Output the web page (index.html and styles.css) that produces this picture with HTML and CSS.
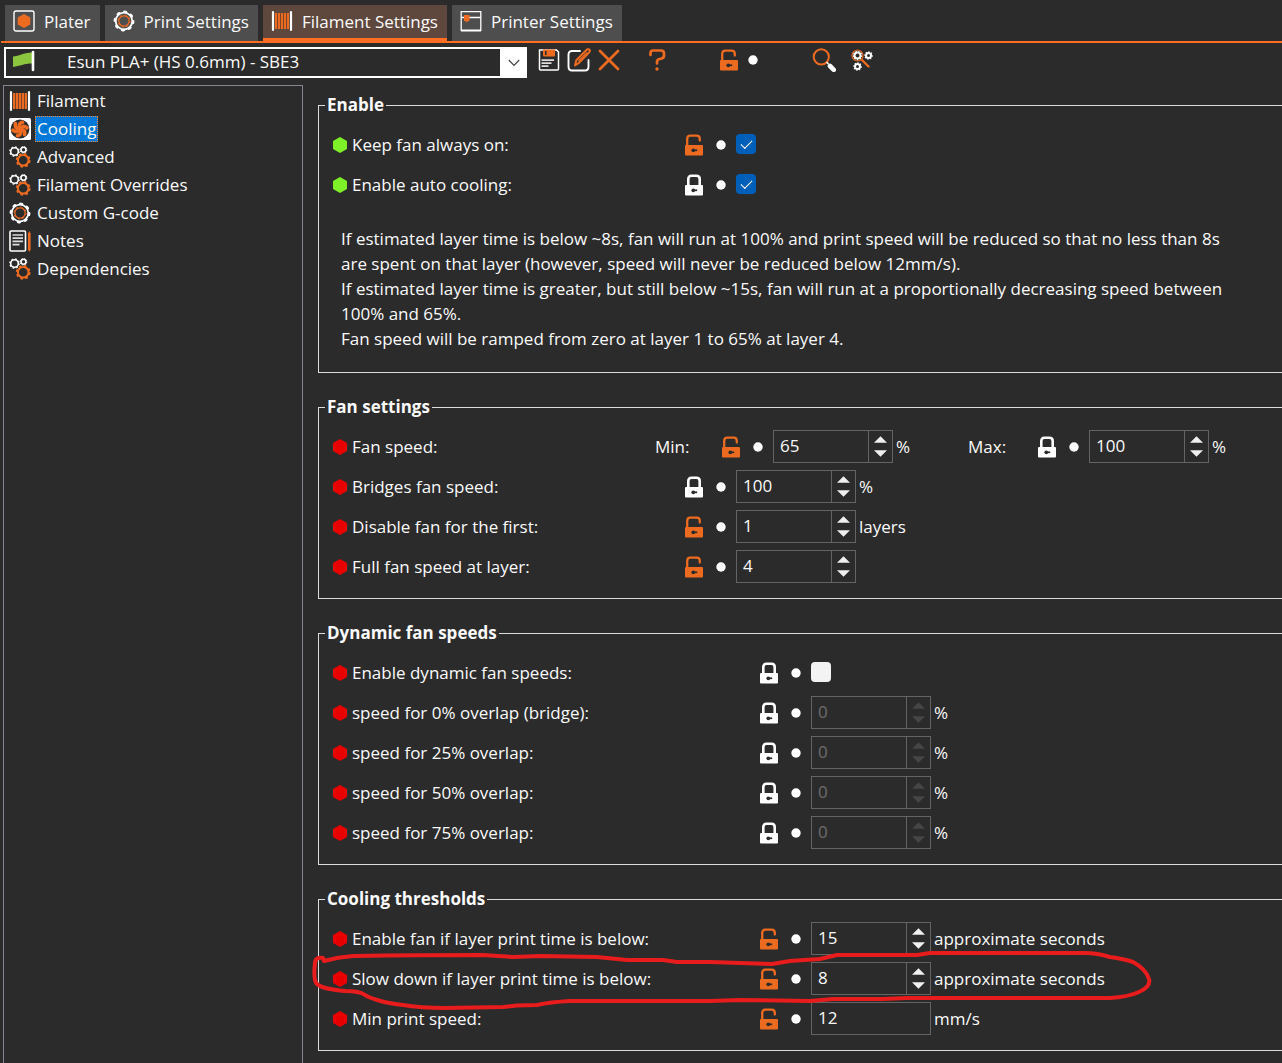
FILE: index.html
```html
<!DOCTYPE html>
<html lang="en">
<head>
<meta charset="utf-8">
<meta name="viewport" content="width=device-width, initial-scale=1">
<title>Filament Settings</title>
<link rel="stylesheet" href="styles.css">
</head>
<body>
<svg class="defs" aria-hidden="true">
  <symbol id="hex" viewBox="0 0 14 16"><path fill="currentColor" d="M7 0l7 4v8l-7 4-7-4V4z"/></symbol>
  <symbol id="locked" viewBox="0 0 20 22"><path fill="none" stroke="currentColor" stroke-width="2.6" d="M4.300 12V5Q4.300 1.800 7.500 1.800h5q3.200 0 3.200 3.200V12"/><rect x="1" y="11" width="18" height="10.500" rx="1" fill="currentColor"/><circle cx="9.300" cy="16.300" r="1.900" fill="#2b2b2b"/><path stroke="#2b2b2b" stroke-width="1.700" d="M10 16.300h3.200"/></symbol>
  <symbol id="unlocked" viewBox="0 0 20 22"><path fill="none" stroke="currentColor" stroke-width="2.300" stroke-linecap="round" d="M3.200 12V5Q3.200 1.700 6.400 1.700h6.200q3.200 0 3.200 3.200v1.600"/><rect x="1" y="11" width="18" height="10.500" rx="1" fill="currentColor"/><circle cx="9.300" cy="16.300" r="1.900" fill="#2b2b2b"/><path stroke="#2b2b2b" stroke-width="1.700" d="M10 16.300h3.200"/></symbol>
  <symbol id="dot" viewBox="0 0 10 10"><circle cx="5" cy="5" r="4.700" fill="#fff"/></symbol>
  <symbol id="up" viewBox="0 0 14 7"><path fill="currentColor" d="M7 0l7 7H0z"/></symbol>
  <symbol id="down" viewBox="0 0 14 7"><path fill="currentColor" d="M0 0h14L7 7z"/></symbol>
  <symbol id="spool" viewBox="0 0 22 22"><path fill="#ed6b21" d="M4 3h14v16H4z"/><path stroke="#2b2b2b" stroke-width=".6" d="M6.500 3v16M9.500 3v16M12.500 3v16M15.500 3v16"/><path stroke="#fff" stroke-width="2.200" stroke-linecap="round" d="M2 2v18M20 2v18"/></symbol>
  <symbol id="gear" viewBox="0 0 22 22"><circle cx="11" cy="11" r="8.300" fill="none" stroke="#fff" stroke-width="1.800"/><circle cx="11" cy="11" r="9.300" fill="none" stroke="#fff" stroke-width="2.200" stroke-linecap="round" stroke-dasharray="2 5.300"/><circle cx="11" cy="11" r="5.200" fill="none" stroke="#ed6b21" stroke-width="1.300"/><circle cx="11" cy="11" r="6" fill="none" stroke="#ed6b21" stroke-width="1" stroke-dasharray="2 2.700"/></symbol>
  <symbol id="gears" viewBox="0 0 22 22"><g fill="none" stroke="#fff"><circle cx="5.500" cy="5.500" r="3.800" stroke-width="1.600"/><circle cx="5.500" cy="5.500" r="4.700" stroke-width="1.200" stroke-dasharray="1.700 2"/><circle cx="14.500" cy="3.800" r="2.500" stroke-width="1.500"/><circle cx="14.500" cy="3.800" r="3.300" stroke-width="1" stroke-dasharray="1.300 1.300"/></g><g fill="none" stroke="#ed6b21"><circle cx="14.200" cy="14.300" r="5.300" stroke-width="2"/><circle cx="14.200" cy="14.300" r="6.500" stroke-width="1.800" stroke-dasharray="2.600 2.500"/></g></symbol>
</svg>

<nav class="tabs">
  <button class="tab" type="button"><svg class="icon" viewBox="0 0 22 22"><rect x="1" y="1" width="20" height="20" rx="2" fill="none" stroke="#fff" stroke-width="1.400"/><path fill="#ed6b21" d="M11 4l6.300 3.500v7L11 18l-6.300-3.500v-7z"/></svg>Plater</button>
  <button class="tab" type="button"><svg class="icon"><use href="#gear"/></svg>Print Settings</button>
  <button class="tab active" type="button"><svg class="icon"><use href="#spool"/></svg>Filament Settings</button>
  <button class="tab" type="button"><svg class="icon" viewBox="0 0 22 22"><path fill="none" stroke="#fff" stroke-width="1.300" d="M1.200 1v20M20.800 1v20M1 1.600h20M1 7.500h20"/><path stroke="#fff" stroke-width="2" d="M1 20.500h20"/><path fill="#ed6b21" d="M4 5h5.500v6H8l-1.300 1.500L5.400 11H4z"/></svg>Printer Settings</button>
</nav>

<header class="toolbar">
  <div class="preset">
    <svg class="flag" viewBox="0 0 22 22"><path fill="#8cc63f" d="M0 6.500C6 6 10 3 19 2.500v11C11 13.500 7 16 0 17z"/><path stroke="#fff" stroke-width="2.600" stroke-linecap="round" d="M20 2v18"/></svg>
    <select aria-label="Filament preset"><option>Esun PLA+ (HS 0.6mm) - SBE3</option></select>
    <span class="arrow"><svg viewBox="0 0 12 8"><path fill="none" stroke="#444" stroke-width="1.200" d="M.800 1L6 6.500 11.200 1"/></svg></span>
  </div>
  <div class="tools">
    <button type="button" aria-label="Save preset"><svg viewBox="0 0 24 24"><path fill="none" stroke="#fff" stroke-width="1.500" d="M2.500 2h17l2 2v17q0 1-1 1h-17q-1 0-1-1V2z"/><path fill="#ed6b21" d="M6 1.500h12v6q0 1-1 1H7q-1 0-1-1z"/><path fill="#2b2b2b" d="M8 3h1.500v4H8z"/><path stroke="#ddd" stroke-width="1.700" d="M4.500 12.200H17M4.500 15.200h10M4.500 18.200h7"/></svg></button>
    <button type="button" aria-label="Rename preset"><svg viewBox="0 0 24 24"><path fill="none" stroke="#fff" stroke-width="1.900" stroke-linecap="round" d="M13 3H5Q1.500 3 1.500 6.500v12Q1.500 22.500 5 22.500h13q3.500 0 3.500-4V12"/><path fill="#2b2b2b" stroke="#ed6b21" stroke-width="2" stroke-linejoin="round" d="M8 17.500l1.300-5.300L20 1.500q2-1 3 1.200l-1 1.800-10.500 10.700z"/><path stroke="#ed6b21" stroke-width="1.200" d="M11.500 13L20 4.500"/></svg></button>
    <button type="button" aria-label="Delete preset"><svg viewBox="0 0 24 24"><path stroke="#ed6b21" stroke-width="2.700" stroke-linecap="round" d="M3 3l18 18M21 3L3 21"/></svg></button>
  </div>
  <button class="help" type="button" aria-label="Help"><svg viewBox="0 0 24 24"><path fill="none" stroke="#ed6b21" stroke-width="2.700" stroke-linecap="round" stroke-linejoin="round" d="M5.500 7V5q0-2.500 2.500-2.500h8q3 0 3 3v2q0 2.500-2.500 3l-2 .500q-2.500.500-2.500 3v1.500"/><circle cx="12" cy="21" r="1.700" fill="#ed6b21"/></svg></button>
  <div class="state">
    <button class="lock open" type="button" aria-label="Unlocked values"><svg><use href="#unlocked"/></svg></button>
    <button class="dot" type="button" aria-label="Revert values"><svg><use href="#dot"/></svg></button>
  </div>
  <div class="find">
    <button type="button" aria-label="Search"><svg viewBox="0 0 24 24"><circle cx="9.300" cy="8.800" r="7.600" fill="none" stroke="#ed6b21" stroke-width="2"/><path stroke="#fff" stroke-width="1.600" d="M14.500 14l2 2"/><path stroke="#fff" stroke-width="4.600" stroke-linecap="round" d="M18 18l3.800 3.800"/></svg></button>
    <button type="button" aria-label="Mode"><svg viewBox="0 0 24 24"><circle cx="7.500" cy="7.500" r="5.500" fill="none" stroke="#ed6b21" stroke-width="1.200"/><path stroke="#ed6b21" stroke-width="2.400" stroke-linecap="round" d="M12 12l6.500 6.500"/><g fill="none" stroke="#fff" stroke-width="2"><circle cx="7.500" cy="7.500" r="3"/><circle cx="18.500" cy="7.500" r="2.500"/><circle cx="7.500" cy="18.500" r="2.500"/></g><g fill="none" stroke="#fff" stroke-width="1.200" stroke-dasharray="1.300 1.500"><circle cx="7.500" cy="7.500" r="4.100"/><circle cx="18.500" cy="7.500" r="3.700"/><circle cx="7.500" cy="18.500" r="3.700"/></g></svg></button>
  </div>
</header>

<div class="body">
  <nav class="tree">
    <a href="#"><svg class="icon"><use href="#spool"/></svg><span>Filament</span></a>
    <a href="#" class="selected"><svg class="icon" viewBox="0 0 22 22"><rect width="22" height="22" rx="1.500" fill="#fff"/><circle cx="11" cy="11" r="9.400" fill="#2b2b2b"/><circle cx="11" cy="11" r="3" fill="#ed6b21"/><g fill="none" stroke="#ed6b21" stroke-width="3.600" stroke-linecap="round"><path id="blade" d="M11 10Q8.500 6 13.500 4.300"/><use href="#blade" transform="rotate(60 11 11)"/><use href="#blade" transform="rotate(120 11 11)"/><use href="#blade" transform="rotate(180 11 11)"/><use href="#blade" transform="rotate(240 11 11)"/><use href="#blade" transform="rotate(300 11 11)"/></g></svg><span>Cooling</span></a>
    <a href="#"><svg class="icon"><use href="#gears"/></svg><span>Advanced</span></a>
    <a href="#"><svg class="icon"><use href="#gears"/></svg><span>Filament Overrides</span></a>
    <a href="#"><svg class="icon"><use href="#gear"/></svg><span>Custom G-code</span></a>
    <a href="#"><svg class="icon" viewBox="0 0 22 22"><rect x="1" y="1" width="15.500" height="20" rx="1" fill="none" stroke="#fff" stroke-width="1.600"/><path stroke="#ddd" stroke-width="1.700" d="M3.500 5h10.500M3.500 8.200h10.500M3.500 11.400h10.500M3.500 14.600h7"/><path stroke="#ed6b21" stroke-width="2.600" d="M20.300 3v17"/><path fill="#ed6b21" d="M19 3.500l1.300-2.500 1.300 2.500zM19 19.500h2.600L20.300 22z"/></svg><span>Notes</span></a>
    <a href="#"><svg class="icon"><use href="#gears"/></svg><span>Dependencies</span></a>
  </nav>

  <main class="settings">
    <fieldset class="group simple">
      <legend>Enable</legend>
      <div class="row"><label for="fan-on"><svg class="hex"><use href="#hex"/></svg>Keep fan always on:</label><button class="lock open" type="button" aria-label="Unlocked value"><svg><use href="#unlocked"/></svg></button><button class="dot" type="button" aria-label="Revert"><svg><use href="#dot"/></svg></button><input id="fan-on" type="checkbox" checked></div>
      <div class="row"><label for="auto-cool"><svg class="hex"><use href="#hex"/></svg>Enable auto cooling:</label><button class="lock" type="button" aria-label="Locked value"><svg><use href="#locked"/></svg></button><button class="dot" type="button" aria-label="Revert"><svg><use href="#dot"/></svg></button><input id="auto-cool" type="checkbox" checked></div>
      <p class="note">If estimated layer time is below ~8s, fan will run at 100% and print speed will be reduced so that no less than 8s<br>are spent on that layer (however, speed will never be reduced below 12mm/s).<br>If estimated layer time is greater, but still below ~15s, fan will run at a proportionally decreasing speed between<br>100% and 65%.<br>Fan speed will be ramped from zero at layer 1 to 65% at layer 4.</p>
    </fieldset>

    <fieldset class="group">
      <legend>Fan settings</legend>
      <div class="row pair">
        <span class="name"><svg class="hex"><use href="#hex"/></svg>Fan speed:</span>
        <div class="part"><label for="fan-min">Min:</label><button class="lock open" type="button" aria-label="Unlocked value"><svg><use href="#unlocked"/></svg></button><button class="dot" type="button" aria-label="Revert"><svg><use href="#dot"/></svg></button><span class="spin"><input id="fan-min" type="text" value="65"><span class="steps"><button type="button" aria-label="Increase"><svg><use href="#up"/></svg></button><button type="button" aria-label="Decrease"><svg><use href="#down"/></svg></button></span></span><span class="unit">%</span></div>
        <div class="part"><label for="fan-max">Max:</label><button class="lock" type="button" aria-label="Locked value"><svg><use href="#locked"/></svg></button><button class="dot" type="button" aria-label="Revert"><svg><use href="#dot"/></svg></button><span class="spin"><input id="fan-max" type="text" value="100"><span class="steps"><button type="button" aria-label="Increase"><svg><use href="#up"/></svg></button><button type="button" aria-label="Decrease"><svg><use href="#down"/></svg></button></span></span><span class="unit">%</span></div>
      </div>
      <div class="row"><label for="bridge"><svg class="hex"><use href="#hex"/></svg>Bridges fan speed:</label><button class="lock" type="button" aria-label="Locked value"><svg><use href="#locked"/></svg></button><button class="dot" type="button" aria-label="Revert"><svg><use href="#dot"/></svg></button><span class="spin"><input id="bridge" type="text" value="100"><span class="steps"><button type="button" aria-label="Increase"><svg><use href="#up"/></svg></button><button type="button" aria-label="Decrease"><svg><use href="#down"/></svg></button></span></span><span class="unit">%</span></div>
      <div class="row"><label for="first"><svg class="hex"><use href="#hex"/></svg>Disable fan for the first:</label><button class="lock open" type="button" aria-label="Unlocked value"><svg><use href="#unlocked"/></svg></button><button class="dot" type="button" aria-label="Revert"><svg><use href="#dot"/></svg></button><span class="spin"><input id="first" type="text" value="1"><span class="steps"><button type="button" aria-label="Increase"><svg><use href="#up"/></svg></button><button type="button" aria-label="Decrease"><svg><use href="#down"/></svg></button></span></span><span class="unit">layers</span></div>
      <div class="row"><label for="full"><svg class="hex"><use href="#hex"/></svg>Full fan speed at layer:</label><button class="lock open" type="button" aria-label="Unlocked value"><svg><use href="#unlocked"/></svg></button><button class="dot" type="button" aria-label="Revert"><svg><use href="#dot"/></svg></button><span class="spin"><input id="full" type="text" value="4"><span class="steps"><button type="button" aria-label="Increase"><svg><use href="#up"/></svg></button><button type="button" aria-label="Decrease"><svg><use href="#down"/></svg></button></span></span></div>
    </fieldset>

    <fieldset class="group wide">
      <legend>Dynamic fan speeds</legend>
      <div class="row"><label for="dynamic"><svg class="hex"><use href="#hex"/></svg>Enable dynamic fan speeds:</label><button class="lock" type="button" aria-label="Locked value"><svg><use href="#locked"/></svg></button><button class="dot" type="button" aria-label="Revert"><svg><use href="#dot"/></svg></button><input id="dynamic" type="checkbox"></div>
      <div class="row"><label for="o0"><svg class="hex"><use href="#hex"/></svg>speed for 0% overlap (bridge):</label><button class="lock" type="button" aria-label="Locked value"><svg><use href="#locked"/></svg></button><button class="dot" type="button" aria-label="Revert"><svg><use href="#dot"/></svg></button><span class="spin"><input id="o0" type="text" value="0" disabled><span class="steps"><button type="button" aria-label="Increase" disabled><svg><use href="#up"/></svg></button><button type="button" aria-label="Decrease" disabled><svg><use href="#down"/></svg></button></span></span><span class="unit">%</span></div>
      <div class="row"><label for="o25"><svg class="hex"><use href="#hex"/></svg>speed for 25% overlap:</label><button class="lock" type="button" aria-label="Locked value"><svg><use href="#locked"/></svg></button><button class="dot" type="button" aria-label="Revert"><svg><use href="#dot"/></svg></button><span class="spin"><input id="o25" type="text" value="0" disabled><span class="steps"><button type="button" aria-label="Increase" disabled><svg><use href="#up"/></svg></button><button type="button" aria-label="Decrease" disabled><svg><use href="#down"/></svg></button></span></span><span class="unit">%</span></div>
      <div class="row"><label for="o50"><svg class="hex"><use href="#hex"/></svg>speed for 50% overlap:</label><button class="lock" type="button" aria-label="Locked value"><svg><use href="#locked"/></svg></button><button class="dot" type="button" aria-label="Revert"><svg><use href="#dot"/></svg></button><span class="spin"><input id="o50" type="text" value="0" disabled><span class="steps"><button type="button" aria-label="Increase" disabled><svg><use href="#up"/></svg></button><button type="button" aria-label="Decrease" disabled><svg><use href="#down"/></svg></button></span></span><span class="unit">%</span></div>
      <div class="row"><label for="o75"><svg class="hex"><use href="#hex"/></svg>speed for 75% overlap:</label><button class="lock" type="button" aria-label="Locked value"><svg><use href="#locked"/></svg></button><button class="dot" type="button" aria-label="Revert"><svg><use href="#dot"/></svg></button><span class="spin"><input id="o75" type="text" value="0" disabled><span class="steps"><button type="button" aria-label="Increase" disabled><svg><use href="#up"/></svg></button><button type="button" aria-label="Decrease" disabled><svg><use href="#down"/></svg></button></span></span><span class="unit">%</span></div>
    </fieldset>

    <fieldset class="group wide">
      <legend>Cooling thresholds</legend>
      <div class="row"><label for="fan-below"><svg class="hex"><use href="#hex"/></svg>Enable fan if layer print time is below:</label><button class="lock open" type="button" aria-label="Unlocked value"><svg><use href="#unlocked"/></svg></button><button class="dot" type="button" aria-label="Revert"><svg><use href="#dot"/></svg></button><span class="spin"><input id="fan-below" type="text" value="15"><span class="steps"><button type="button" aria-label="Increase"><svg><use href="#up"/></svg></button><button type="button" aria-label="Decrease"><svg><use href="#down"/></svg></button></span></span><span class="unit">approximate seconds</span></div>
      <div class="row marked"><label for="slow-below"><svg class="hex"><use href="#hex"/></svg>Slow down if layer print time is below:</label><button class="lock open" type="button" aria-label="Unlocked value"><svg><use href="#unlocked"/></svg></button><button class="dot" type="button" aria-label="Revert"><svg><use href="#dot"/></svg></button><span class="spin"><input id="slow-below" type="text" value="8"><span class="steps"><button type="button" aria-label="Increase"><svg><use href="#up"/></svg></button><button type="button" aria-label="Decrease"><svg><use href="#down"/></svg></button></span></span><span class="unit">approximate seconds</span>
        <svg class="marker" viewBox="312 950 840 60" aria-hidden="true"><path d="M323 958Q315 957 315 963Q313 980 317 984Q322 989 345 991Q360 991 365 995Q377 1002 403 1005Q420 1008 445 1008L503 1007L517 1005.500L537 1005Q550 1002 570 1001H710L740 1000L810 1001L833 999H883L907 998H1110Q1128 997 1139 992Q1151 987 1149 979Q1146 969 1133 962Q1124 959 1110 957Q1097 953 1085 953H930L917 955H837L820 959L790 961L772 964L740 963L710 962H677L663 960H627L597 957L540 956L513 957L483 955Q420 955 353 956Q338 957 324 961Z"/></svg>
      </div>
      <div class="row"><label for="min-speed"><svg class="hex"><use href="#hex"/></svg>Min print speed:</label><button class="lock open" type="button" aria-label="Unlocked value"><svg><use href="#unlocked"/></svg></button><button class="dot" type="button" aria-label="Revert"><svg><use href="#dot"/></svg></button><span class="spin"><input id="min-speed" type="text" value="12"></span><span class="unit">mm/s</span></div>
    </fieldset>
  </main>
</div>
</body>
</html>
```

FILE: styles.css
```css
* { box-sizing: border-box; }

body {
  margin: 0;
  min-height: 100vh;
  display: flex;
  flex-direction: column;
  background: #2b2b2b;
  color: #fafafa;
  font: 17px/24px "Segoe UI", "Open Sans", "Noto Sans", sans-serif;
  overflow-x: hidden;
}

button, input, select { font: inherit; color: inherit; }

button {
  display: flex;
  align-items: center;
  justify-content: center;
  margin: 0;
  padding: 0;
  border: 0;
  background: none;
}

svg { display: block; flex: none; }
.defs { position: absolute; width: 0; height: 0; }
.icon { width: 22px; height: 22px; }

/* Tabs */
.tabs {
  display: flex;
  gap: 5px;
  margin-left: 1px;
  padding: 5px 4px 0;
  border-bottom: 2px solid #ff6d22;
}
.tab {
  height: 36px;
  padding: 0 9px 2px 8px;
  gap: 9px;
  background: #4e4e4e;
}
.tab .icon { margin-bottom: 2px; }
.tab.active { background: #5e483e; box-shadow: inset 0 -3px #ff6d22; }

/* Toolbar */
.toolbar { display: flex; align-items: flex-start; height: 42px; padding: 4px; }
.preset { position: relative; width: 523px; }
.preset select {
  display: block;
  width: 100%;
  height: 31px;
  padding: 0 30px 2px 61px;
  border: 2px solid #fff;
  border-radius: 0;
  background: #2b2b2b;
  appearance: none;
}
.flag { position: absolute; left: 9px; top: 3px; width: 22px; height: 22px; }
.arrow {
  position: absolute;
  top: 0;
  right: 0;
  display: grid;
  place-items: center;
  width: 27px;
  height: 31px;
  background: #fff;
  pointer-events: none;
}
.arrow svg { width: 12px; height: 8px; }
.toolbar button { height: 26px; }
.toolbar button svg { width: 24px; height: 24px; }
.tools { display: flex; gap: 6px; margin-left: 10px; }
.help { margin-left: 24px; }
.state { display: flex; margin-left: 50px; }
.find { display: flex; gap: 14px; margin-left: 47px; }

/* Page tree */
.body { flex: 1; display: flex; gap: 15px; padding-left: 3px; }
.tree {
  flex: none;
  width: 300px;
  padding: 1px 5px;
  border: 1px solid #828790;
  border-bottom: 0;
}
.tree a {
  display: flex;
  align-items: center;
  gap: 4px;
  height: 28px;
  color: inherit;
  text-decoration: none;
}
.tree span { padding: 0 1px; border: 1px solid transparent; }
.tree .selected span { background: #0078d7; border: 1px dotted #ff8728; }

/* Option groups */
.settings { flex: 1; min-width: 0; padding: 8px 0 12px; }
.group {
  min-width: 0;
  margin: 0 0 22px;
  padding: 8px 0 11px 14px;
  border: 1px solid #dcdcdc;
  border-right: 0;
  color: #fafafa;
}
.group:last-child { margin-bottom: 0; }
legend { margin-left: -8px; padding: 0 2px; font-weight: 700; }
.row { display: flex; align-items: center; height: 40px; }
.row > label { display: flex; align-items: center; gap: 5px; width: 351px; }
.wide .row > label { width: 426px; }
.hex { width: 14px; height: 16px; color: #e60000; }
.simple .hex { color: #7df028; }
.name { display: flex; align-items: center; gap: 5px; width: 322px; }
.part { display: flex; align-items: center; width: 313px; }
.part label { width: 66px; }
.part + .part label { width: 69px; }

.lock { width: 20px; height: 22px; color: #fff; }
.row .lock svg, .toolbar .lock svg { width: 20px; height: 22px; }
.lock.open { color: #ed6b21; }
.dot { width: 32px; padding-left: 2px; }
.toolbar .dot { width: 26px; }
.row .dot svg, .toolbar .dot svg { width: 10px; height: 10px; }

.spin {
  display: flex;
  width: 120px;
  height: 33px;
  margin-bottom: 1px;
  border: 1px solid #646464;
}
.spin input {
  flex: 1;
  min-width: 0;
  padding: 0 6px 2px;
  border: 0;
  outline: 0;
  background: none;
}
.steps {
  display: flex;
  flex-direction: column;
  justify-content: center;
  gap: 7px;
  width: 24px;
  border-left: 1px solid #646464;
  color: #f0f0f0;
}
.steps svg { width: 13px; height: 7px; }
.spin :disabled { color: #6d6d6d; }
.steps :disabled { color: #464646; }
.unit { margin-left: 3px; }

input[type="checkbox"] {
  display: grid;
  place-items: center;
  width: 20px;
  height: 20px;
  margin: 0 0 2px;
  border-radius: 4px;
  background: #f3f3f3;
  appearance: none;
}
input[type="checkbox"]:checked { background: #005fb8; }
input[type="checkbox"]:checked::after {
  content: "";
  width: 10px;
  height: 5px;
  margin-bottom: 3px;
  border: solid #fff;
  border-width: 0 0 1px 1px;
  transform: rotate(-45deg);
}

.note { margin: 21px 0 10px 8px; line-height: 25px; white-space: nowrap; }

/* Hand-drawn ring round the row */
.marked { position: relative; }
.marker {
  position: absolute;
  left: -21px;
  top: -9px;
  width: 840px;
  height: 60px;
  fill: none;
  stroke: #e81c1c;
  stroke-width: 4;
  stroke-linejoin: round;
  pointer-events: none;
}
```
